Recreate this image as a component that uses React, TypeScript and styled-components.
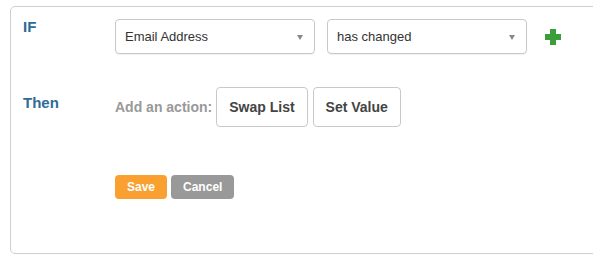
import React from 'react';
import styled, { createGlobalStyle } from 'styled-components';

const GlobalStyle = createGlobalStyle`
  html, body {
    margin: 0;
    padding: 0;
    background: #fff;
    font-family: "Liberation Sans", Arial, sans-serif;
  }
`;

const Page = styled.div`
  padding: 6px 0 0 10px;
  width: 593px;
  height: 263px;
  box-sizing: border-box;
  overflow: hidden;
`;

const Panel = styled.div`
  width: 620px;
  height: 248px;
  box-sizing: border-box;
  border: 1px solid #cfcfcf;
  border-radius: 5px;
  padding: 10px 0 0 12px;
`;

const Row = styled.div<{ $height: number }>`
  display: flex;
  align-items: flex-start;
  height: ${(p) => p.$height}px;
`;

const Label = styled.div<{ $top: number }>`
  width: 92px;
  font-size: 15px;
  line-height: 17px;
  font-weight: bold;
  color: #2e6b95;
  padding-top: ${(p) => p.$top}px;
`;

const Controls = styled.div`
  display: flex;
  align-items: center;
  gap: 12px;
  margin-top: 2px;
`;

const Select = styled.div`
  position: relative;
  width: 200px;
  height: 35px;
  box-sizing: border-box;
  border: 1px solid #c8c8c8;
  border-radius: 4px;
  display: flex;
  align-items: center;
  padding-left: 9px;
  font-size: 13px;
  color: #333;
  box-shadow: 0 1px 1px rgba(0, 0, 0, 0.06);
`;

const Caret = styled.span`
  position: absolute;
  right: 11px;
  top: 15px;
  width: 0;
  height: 0;
  border-left: 3.5px solid transparent;
  border-right: 3.5px solid transparent;
  border-top: 5px solid #888;
`;

const Plus = styled.svg`
  margin-left: 6px;
  display: block;
`;

const ActionRow = styled.div`
  display: flex;
  align-items: center;
  gap: 5px;
`;

const Hint = styled.span`
  font-size: 14px;
  font-weight: bold;
  color: #999;
  margin-right: -1px;
`;

const ActionButton = styled.button`
  height: 40px;
  box-sizing: border-box;
  padding: 0 12px;
  border: 1px solid #c8c8c8;
  border-radius: 4px;
  background: #fff;
  font-family: "Liberation Sans", Arial, sans-serif;
  font-size: 14px;
  font-weight: bold;
  color: #444;
`;

const Footer = styled.div`
  display: flex;
  gap: 4px;
  padding-left: 92px;
`;

const FormButton = styled.button<{ $color: string }>`
  height: 24px;
  box-sizing: border-box;
  padding: 0 12px;
  border: none;
  border-radius: 4px;
  background: ${(p) => p.$color};
  color: #fff;
  font-family: "Liberation Sans", Arial, sans-serif;
  font-size: 12px;
  font-weight: bold;
`;

const App: React.FC = () => {
  return (
    <>
      <GlobalStyle />
      <Page>
        <Panel>
          <Row $height={70}>
            <Label $top={1}>IF</Label>
            <Controls>
              <Select>
                Email Address
                <Caret />
              </Select>
              <Select>
                has changed
                <Caret />
              </Select>
              <Plus width="16" height="16" viewBox="0 0 16 16">
                <path d="M5 0h6v5h5v6h-5v5H5v-5H0V5h5z" fill="#3b9e3b" />
              </Plus>
            </Controls>
          </Row>
          <Row $height={88}>
            <Label $top={7}>Then</Label>
            <ActionRow>
              <Hint>Add an action:</Hint>
              <ActionButton>Swap List</ActionButton>
              <ActionButton>Set Value</ActionButton>
            </ActionRow>
          </Row>
          <Footer>
            <FormButton $color="#f9a030">Save</FormButton>
            <FormButton $color="#999999">Cancel</FormButton>
          </Footer>
        </Panel>
      </Page>
    </>
  );
};

export default App;
